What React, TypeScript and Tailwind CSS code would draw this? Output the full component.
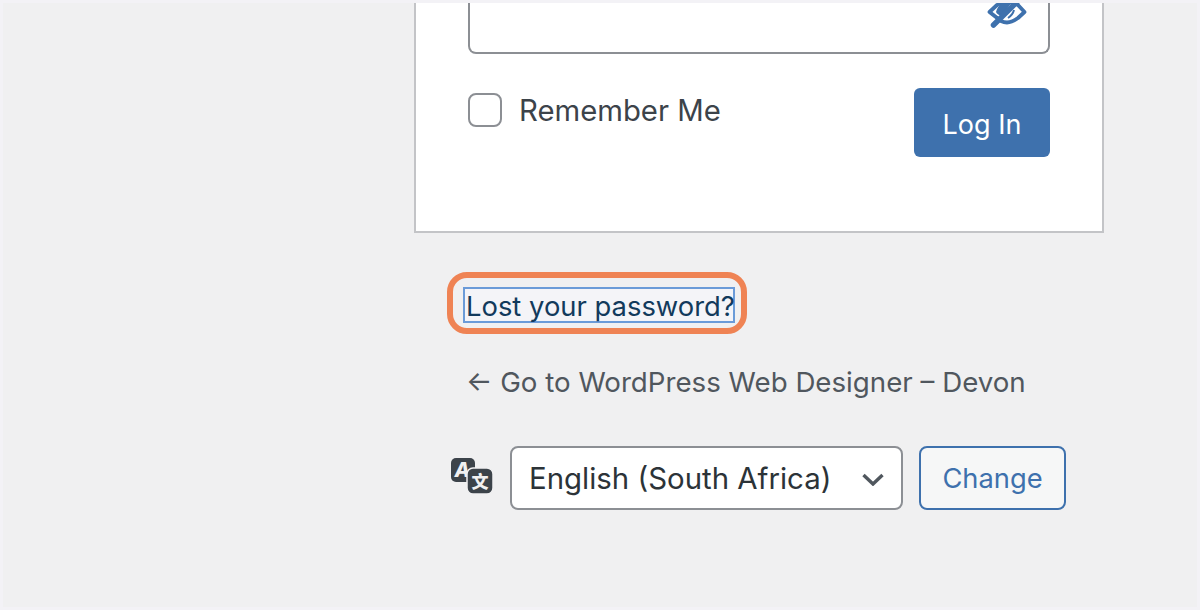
import React from "react";

function Eye() {
  return (
    <svg viewBox="0 0 40 30" className="absolute right-[21px] top-[-3px] w-[40px] h-[30px]" fill="none">
      <path d="M2.5 12 L10 5 C14 2.5 17 2 20 2 C24 2 28 3 31 5 L37.5 12 L31 18 C27 21 24 22.5 20 22.5 C18 22.5 16 22 14 21 Z" stroke="#3e71ad" strokeWidth="3.8" strokeLinejoin="round" />
      <path d="M9 12 C10 8 12 5 15 3 L25 2 L15 16 C12 15.5 10 14 9 12 Z" fill="#3e71ad" />
      <path d="M31 1 L6.5 25" stroke="#3e71ad" strokeWidth="5.5" strokeLinecap="round" />
      <path d="M27 10 C26 14 24 16 21 18" stroke="#3e71ad" strokeWidth="2" />
    </svg>
  );
}

function Translate() {
  return (
    <svg viewBox="0 0 43 36" className="w-[43px] h-[36px] mt-[12px]">
      <rect x="1" y="0" width="24" height="24" rx="5" fill="#3c434a" />
      <text x="4.5" y="19" fontSize="20" fontWeight="800" fontStyle="italic" fill="#f0f0f1" fontFamily="Inter, sans-serif">A</text>
      <rect x="17" y="10" width="26" height="26" rx="6" fill="#3c434a" stroke="#f0f0f1" strokeWidth="1.5" />
      <text x="30" y="30" fontSize="17" fontWeight="900" textAnchor="middle" fill="#f0f0f1" fontFamily="'Noto Sans CJK SC', sans-serif">文</text>
    </svg>
  );
}

export default function App() {
  return (
    <div className="w-[1200px] h-[610px] bg-[#f3f2f6] p-[3px] font-['Inter',sans-serif]">
      <div className="h-full bg-[#f0f0f1] overflow-hidden pl-[411px]">
        <div className="w-[690px] h-[230px] bg-white border-x-2 border-b-2 border-[#c3c4c7] px-[52px]">
          <div className="relative h-[51px] bg-white border-x-2 border-b-2 border-[#8c8f94] rounded-b-lg">
            <Eye />
          </div>
          <div className="flex justify-between mt-[34px]">
            <label className="flex items-start gap-[17px] text-[#3c434a] text-[29.3px] leading-[34px]">
              <span className="w-[34px] h-[34px] mt-[5px] bg-white border-2 border-[#8c8f94] rounded-lg" />
              <span className="mt-[6px]">Remember Me</span>
            </label>
            <button className="w-[136px] h-[69px] pt-[5px] bg-[#3e71ad] rounded-md text-white text-[27px]">Log In</button>
          </div>
        </div>
        <div className="w-[690px] pl-[35px]">
          <div className="mt-[39px] -ml-[2px] w-[300px] h-[62px] rounded-[20px] border-[6px] border-[#ef8354] pl-[10px] pt-[9px]">
            <a className="block w-[272px] h-[36px] border-2 border-[#6b9bd8] bg-[#f4f4f8] pl-[1px] text-[#123a5c] text-[27.4px] leading-[34px] whitespace-nowrap">Lost your password?</a>
          </div>
          <div className="mt-[30px] pl-[17px] text-[#50575e] text-[27.7px] leading-[36px] whitespace-nowrap">← Go to WordPress Web Designer – Devon</div>
          <div className="mt-[46px] ml-[1px] flex items-start">
            <Translate />
            <div className="ml-[17px] flex items-center justify-between w-[393px] h-[64px] bg-white border-2 border-[#8c8f94] rounded-lg pl-[17px] pr-[17px] pt-[2px] text-[#2c3338] text-[29.4px] whitespace-nowrap">
              <span>English (South Africa)</span>
              <svg viewBox="0 0 22 13" className="w-[22px] h-[13px]" fill="none"><path d="M1.5 2 L11 11 L20.5 2" stroke="#50575e" strokeWidth="3.4" /></svg>
            </div>
            <button className="ml-[16px] pt-[3px] w-[147px] h-[64px] bg-[#f6f7f7] border-2 border-[#3e71ad] rounded-lg text-[#3e71ad] text-[27.3px]">Change</button>
          </div>
        </div>
      </div>
    </div>
  );
}
